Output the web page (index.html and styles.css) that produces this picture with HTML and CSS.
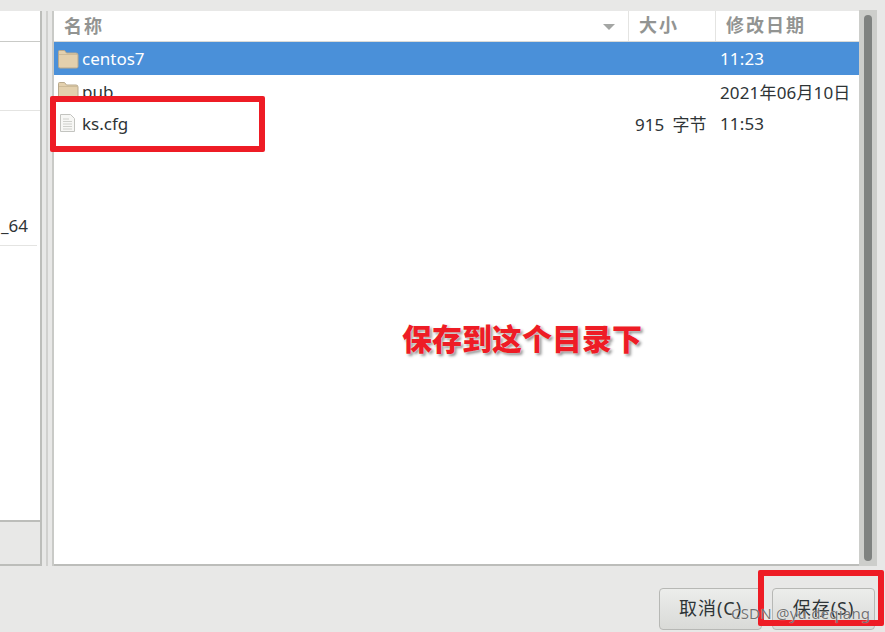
FILE: index.html
```html
<!DOCTYPE html>
<html lang="zh-CN">
<head>
    <meta charset="UTF-8">
    <meta name="viewport" content="width=device-width, initial-scale=1.0">
    <title>保存文件</title>
    <link rel="stylesheet" href="styles.css">
</head>
<body>
    <div class="dialog">
        <div class="panes">
            <!-- Places sidebar, cut off by the screenshot -->
            <div class="sidebar">
                <div class="side-list">
                    <div class="side-row side-row-top"></div>
                    <div class="side-row side-row-mid"></div>
                    <div class="side-row side-row-tall"><span class="side-text">_64</span></div>
                </div>
                <div class="side-foot"></div>
            </div>
            <div class="grip"></div>

            <!-- File list -->
            <div class="files">
                <div class="list">
                    <div class="head">
                        <div class="col-name head-cell">名称
                            <svg class="sort" width="14" height="8" viewBox="0 0 14 8"><path d="M1 1h12L7 7z" fill="#a4a6a4"/></svg>
                        </div>
                        <div class="col-size head-cell">大小</div>
                        <div class="col-date head-cell">修改日期</div>
                    </div>
                    <div class="row selected">
                        <div class="col-name">
                            <svg class="icon" width="22" height="20" viewBox="0 0 22 20"><path d="M1.500 4V2.500q0-1 1-1h5l2 2.500h9.500q2 0 2 2V17.500q0 1.500-1.500 1.500H3q-1.500 0-1.500-1.500z" fill="#e3d0ad" stroke="#b9a98c"/><path d="M2 5.500h18" stroke="#cdbb99"/></svg>
                            centos7
                        </div>
                        <div class="col-size"></div>
                        <div class="col-date">11:23</div>
                    </div>
                    <div class="row">
                        <div class="col-name">
                            <svg class="icon" width="22" height="20" viewBox="0 0 22 20"><path d="M1.500 4V2.500q0-1 1-1h5l2 2.500h9.500q2 0 2 2V17.500q0 1.500-1.500 1.500H3q-1.500 0-1.500-1.500z" fill="#e3d0ad" stroke="#b9a98c"/><path d="M2 5.500h18" stroke="#cdbb99"/></svg>
                            pub
                        </div>
                        <div class="col-size"></div>
                        <div class="col-date">2021年06月10日</div>
                    </div>
                    <div class="row">
                        <div class="col-name">
                            <svg class="icon" width="22" height="20" viewBox="0 0 22 20"><path d="M3.500 1.500h10l4 4v13h-14z" fill="#f7f7f5" stroke="#c3c4c0"/><path d="M6 6h6M6 8.500h9M6 11h9M6 13.500h9M6 16h9" stroke="#cfd0cc"/></svg>
                            ks.cfg
                        </div>
                        <div class="col-size">915 字节</div>
                        <div class="col-date">11:53</div>
                    </div>
                </div>
                <div class="scrollbar"><div class="thumb"></div></div>
            </div>
        </div>

        <div class="actions">
            <button class="btn">取消(C)</button>
            <button class="btn">保存(S)</button>
        </div>
    </div>

    <!-- Annotations drawn over the screenshot -->
    <div class="mark mark-file"></div>
    <div class="mark mark-save"></div>
    <div class="note">保存到这个目录下</div>
    <div class="watermark">CSDN @yu.deqiang</div>
</body>
</html>
```

FILE: styles.css
```css
* {
    box-sizing: border-box;
}

html,
body {
    height: 100%;
}

body {
    margin: 0;
    overflow: hidden;
    position: relative;
    background-color: #e8e8e7;
    color: #2e3436;
    font-family: "Noto Sans", "Noto Sans CJK SC", sans-serif;
    font-size: 17px;
}

.dialog {
    display: flex;
    flex-direction: column;
    height: 100%;
    padding-top: 11px;
}

.panes {
    display: flex;
    height: 555px;
}

/* sidebar */
.sidebar {
    display: flex;
    flex-direction: column;
    width: 42px;
    background-color: #fff;
    border-right: 2px solid #bcbdba;
    border-bottom: 2px solid #bcbdba;
}

.side-list {
    flex: 1;
}

.side-row {
    border-bottom: 1px solid #e4e4e2;
}

.side-row-top {
    height: 31px;
    border-bottom-color: #c9cac7;
}

.side-row-mid {
    height: 69px;
}

.side-row-tall {
    display: flex;
    align-items: flex-end;
    height: 135px;
    margin-right: 3px;
    padding-bottom: 8px;
}

.side-text {
    margin-left: 1px;
}

.side-foot {
    height: 44px;
    background-color: #e8e8e7;
    border-top: 2px solid #bcbdba;
}

.grip {
    width: 6px;
    margin-left: 4px;
    border-left: 2px solid #d0d0ce;
}

/* file list */
.files {
    display: flex;
    flex: 1;
    margin-right: 8px;
    border-left: 2px solid #c9cac7;
}

.list {
    flex: 1;
    background-color: #fff;
    border-bottom: 2px solid #bcbdba;
}

.head,
.row {
    display: flex;
    align-items: center;
}

.head {
    height: 31px;
    border-bottom: 1px solid #d9dad7;
    color: #929492;
    font-size: 18px;
    font-weight: 700;
    letter-spacing: 2px;
}

.head-cell {
    height: 100%;
    line-height: 28px;
}

.row {
    height: 32px;
}

.selected {
    height: 33px;
    background-color: #4a90d9;
    color: #fff;
}

.col-name {
    display: flex;
    align-items: center;
    width: 574px;
    padding-left: 3px;
}

.head .col-name {
    position: relative;
    padding-left: 10px;
}

.sort {
    position: absolute;
    top: 12px;
    right: 12px;
}

.icon {
    flex: none;
    margin-right: 3px;
}

.col-size {
    width: 87px;
    padding-left: 7px;
    white-space: pre;
    word-spacing: 4px;
}

.head .col-size {
    padding-left: 10px;
    border-left: 1px solid #e4e4e2;
}

.col-date {
    flex: 1;
    padding-left: 5px;
    letter-spacing: 0.15px;
    white-space: nowrap;
}

.head .col-date {
    padding-left: 10px;
    border-left: 1px solid #e4e4e2;
    letter-spacing: 2px;
}

.scrollbar {
    width: 18px;
    margin-top: -1px;
    padding: 5px;
    background-color: #cdcecb;
}

.thumb {
    height: 100%;
    background-color: #7f8280;
    border-radius: 4px;
}

/* bottom buttons */
.actions {
    display: flex;
    justify-content: flex-end;
    gap: 10px;
    padding: 22px 10px 0 0;
}

.btn {
    width: 103px;
    height: 42px;
    padding: 0 0 4px;
    background: linear-gradient(#ecedeb, #d9dad7);
    border: 1px solid #b7b8b5;
    border-radius: 4px;
    color: #2e3436;
    font-family: inherit;
    font-size: 18px;
    letter-spacing: 1px;
}

/* annotations */
.mark {
    position: absolute;
    border: 6px solid #ee1c25;
    border-radius: 2px;
}

.mark-file {
    top: 96px;
    left: 50px;
    width: 215px;
    height: 56px;
}

.mark-save {
    top: 570px;
    left: 758px;
    width: 126px;
    height: 56px;
}

.note {
    position: absolute;
    top: 318px;
    left: 402px;
    color: #ee1c25;
    font-size: 30px;
    font-weight: 900;
    line-height: 42px;
    text-shadow: 0 0 2px #ffffff, 2px 2px 3px #8a8a8a;
}

.watermark {
    position: absolute;
    top: 603px;
    left: 731px;
    color: rgba(70, 70, 70, 0.75);
    font-size: 15px;
    letter-spacing: 0.2px;
    line-height: 20px;
    text-shadow: 0 0 1px #fff;
}
```
